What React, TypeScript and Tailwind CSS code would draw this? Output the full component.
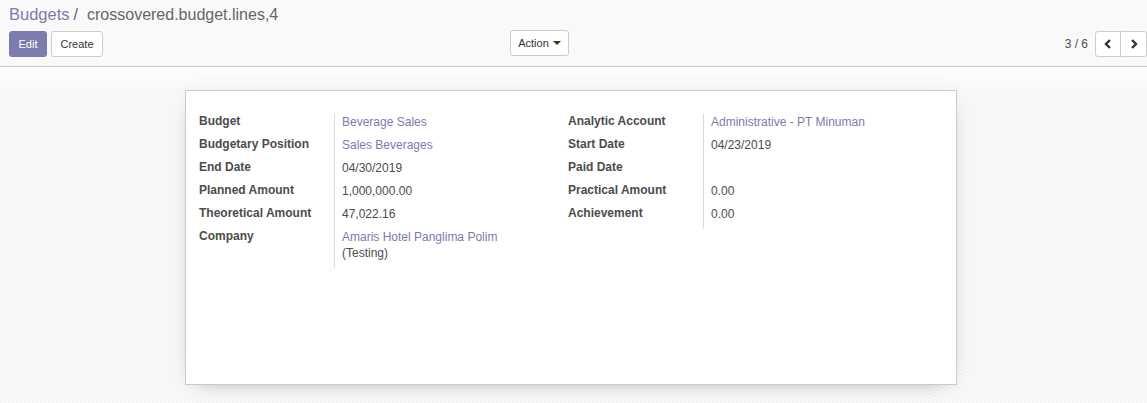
import React from "react";

type Row = { label: string; value: React.ReactNode; tall?: boolean };

const leftRows: Row[] = [
  { label: "Budget", value: <span className="text-[#7c7bad]">Beverage Sales</span> },
  { label: "Budgetary Position", value: <span className="text-[#7c7bad]">Sales Beverages</span> },
  { label: "End Date", value: "04/30/2019" },
  { label: "Planned Amount", value: "1,000,000.00" },
  { label: "Theoretical Amount", value: "47,022.16" },
  {
    label: "Company",
    tall: true,
    value: (
      <div className="leading-[16px] pt-[4px] pb-[3px]">
        <div className="text-[#7c7bad]">Amaris Hotel Panglima Polim</div>
        <div>(Testing)</div>
      </div>
    ),
  },
];

const rightRows: Row[] = [
  { label: "Analytic Account", value: <span className="text-[#7c7bad]">Administrative - PT Minuman</span> },
  { label: "Start Date", value: "04/23/2019" },
  { label: "Paid Date", value: "" },
  { label: "Practical Amount", value: "0.00" },
  { label: "Achievement", value: "0.00" },
];

function Group({ rows }: { rows: Row[] }) {
  return (
    <div className="w-[369px] relative">
      <div className="absolute left-[135px] top-[3.5px] bottom-[-3.5px] w-px bg-[#dadada]" />
      <div className="grid grid-cols-[135px_1fr] content-start">
        {rows.map((r, i) => (
          <React.Fragment key={i}>
            <div className="font-bold text-[#4c4c4c] h-[23px] leading-[23px]">{r.label}</div>
            {r.tall ? (
              <div className="pl-[8px] text-[#4c4c4c]">{r.value}</div>
            ) : (
              <div className="pl-[8px] text-[#4c4c4c] h-[23px] leading-[23px] pt-[1px]">{r.value}</div>
            )}
          </React.Fragment>
        ))}
      </div>
    </div>
  );
}

export default function App() {
  return (
    <div
      className="w-[1147px] h-[403px] overflow-hidden text-[12px] text-[#4c4c4c] flex flex-col"
      style={{ fontFamily: '"Liberation Sans", Arial, sans-serif' }}
    >
      {/* Control panel */}
      <div className="bg-[#f9f9f9] border-b border-[#cccccc] h-[67px] pl-[9px] shrink-0">
        <div className="h-[31px] flex items-center text-[16px] leading-none pb-[2px]">
          <span className="text-[#7c7bad] text-[16.5px]">Budgets</span>
          <span className="text-[#666666] ml-[4px]">/</span>
          <span className="text-[#666666] ml-[9px]">crossovered.budget.lines,4</span>
        </div>
        <div className="flex items-start">
          <div className="w-[501px] flex gap-[4px]">
            <button className="h-[26px] w-[38px] rounded-[3px] bg-[#7c7bad] text-white text-[11px] border border-[#7c7bad] flex items-center justify-center">
              Edit
            </button>
            <button className="h-[26px] w-[52px] rounded-[3px] bg-white text-[#333] text-[11px] border border-[#cccccc] flex items-center justify-center">
              Create
            </button>
          </div>
          <button className="h-[26px] w-[59px] rounded-[3px] bg-white text-[#333] text-[11px] border border-[#cccccc] flex items-center justify-center -mt-px">
            Action
            <span className="ml-[4px] w-0 h-0 border-l-[4px] border-r-[4px] border-t-[4px] border-l-transparent border-r-transparent border-t-[#333]" />
          </button>
          <div className="flex-1" />
          <div className="flex items-center">
            <span className="text-[12px] text-[#4c4c4c] mr-[7px]">3 / 6</span>
            <div className="flex">
              <button className="w-[26px] h-[26px] bg-white border border-[#cccccc] rounded-l-[3px] flex items-center justify-center">
                <svg width="8" height="10" viewBox="0 0 8 10">
                  <path d="M6 1 L2 5 L6 9" stroke="#333" strokeWidth="2.4" fill="none" />
                </svg>
              </button>
              <button className="w-[26px] h-[26px] bg-white border border-l-0 border-[#cccccc] rounded-r-[3px] flex items-center justify-center">
                <svg width="8" height="10" viewBox="0 0 8 10">
                  <path d="M2 1 L6 5 L2 9" stroke="#333" strokeWidth="2.4" fill="none" />
                </svg>
              </button>
            </div>
          </div>
        </div>
      </div>

      {/* Form background */}
      <div className="flex-1 relative bg-[repeating-conic-gradient(#f4f4f4_0_25%,#fbfbfb_0_50%)] bg-[length:4px_4px]">
        <div className="absolute inset-x-0 top-0 h-[24px] bg-gradient-to-b from-white to-transparent opacity-80" />
        <div className="relative pt-[23px] pl-[185px]">
          <div className="w-[772px] h-[295px] bg-white border border-[#c9c9d3] shadow-[0_5px_20px_-12px_rgba(0,0,0,0.5)] px-[13px] pt-[19px]">
            <div className="flex items-start">
              <Group rows={leftRows} />
              <Group rows={rightRows} />
            </div>
          </div>
        </div>
      </div>
    </div>
  );
}
